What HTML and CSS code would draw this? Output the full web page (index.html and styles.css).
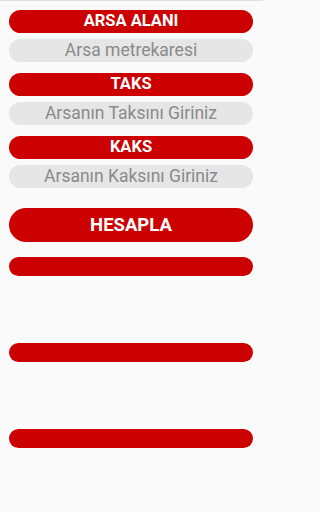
FILE: index.html
```html
<!DOCTYPE html>
<html lang="tr">
<head>
<meta charset="utf-8">
<title>Taks Kaks Hesaplama</title>
<link rel="stylesheet" href="styles.css">
</head>
<body>
<div class="top-line"></div>
<main class="form">
  <section class="field">
    <div class="label">ARSA ALANI</div>
    <div class="input">Arsa metrekaresi</div>
  </section>
  <section class="field">
    <div class="label">TAKS</div>
    <div class="input">Arsanın Taksını Giriniz</div>
  </section>
  <section class="field">
    <div class="label">KAKS</div>
    <div class="input">Arsanın Kaksını Giriniz</div>
  </section>
  <button class="calc">HESAPLA</button>
  <div class="results">
    <div class="result"></div>
    <div class="result"></div>
    <div class="result"></div>
  </div>
</main>
</body>
</html>
```

FILE: styles.css
```css
html, body {
  margin: 0;
  padding: 0;
  background: #fafafa;
  font-family: Roboto, "Noto Sans", "Liberation Sans", sans-serif;
}
body {
  width: 263px;
  height: 512px;
  overflow: hidden;
}
.top-line {
  height: 1px;
  background: #e0e0e0;
}
.form {
  display: flex;
  flex-direction: column;
  padding: 9px 10px 0 9px;
}
.field {
  display: flex;
  flex-direction: column;
  gap: 6px;
  margin-bottom: 11px;
}
.label {
  height: 23px;
  border-radius: 11.5px;
  background: #cc0000;
  color: #ffffff;
  font-size: 16.5px;
  font-weight: bold;
  display: flex;
  align-items: center;
  justify-content: center;
  line-height: 1;
}
.input {
  height: 23px;
  border-radius: 12px;
  background: #e6e6e6;
  color: #8a8a8a;
  font-size: 17.5px;
  display: flex;
  align-items: center;
  justify-content: center;
  line-height: 1;
}
.calc {
  margin-top: 9px;
  height: 34px;
  border: none;
  border-radius: 17px;
  background: #cc0000;
  color: #ffffff;
  font-family: inherit;
  font-size: 18.5px;
  font-weight: bold;
  padding: 0;
}
.results {
  display: flex;
  flex-direction: column;
  gap: 67px;
  margin-top: 15px;
}
.result {
  height: 19px;
  border-radius: 10px;
  background: #cc0000;
}
```
